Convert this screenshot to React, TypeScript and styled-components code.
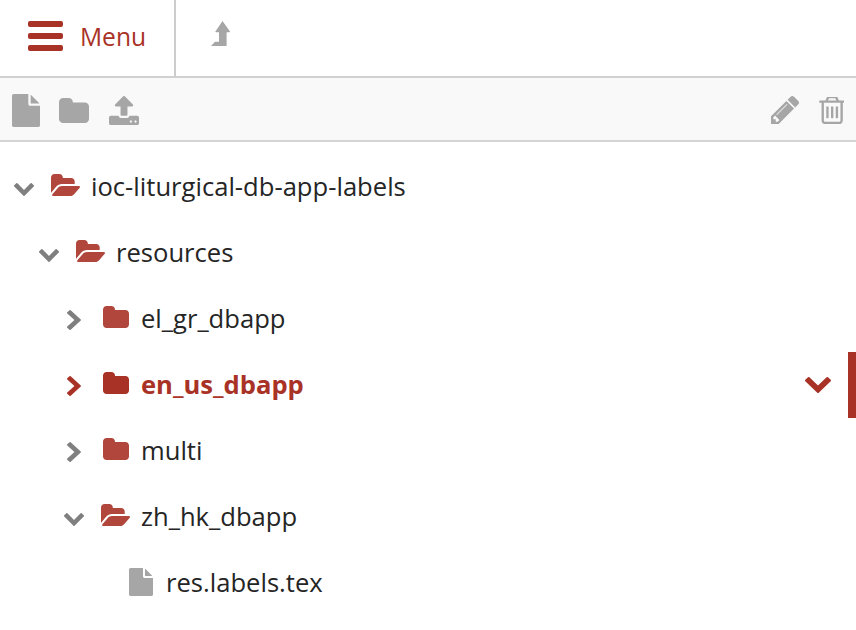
import React from "react";
import styled, { createGlobalStyle } from "styled-components";

const RED = "#a93226";
const GREY = "#a6a6a6";

const GlobalStyle = createGlobalStyle`
  html, body {
    margin: 0;
    padding: 0;
    background: #fff;
    font-family: "Open Sans", "Liberation Sans", sans-serif;
    overflow: hidden;
  }
`;

const PATHS = {
  file: "M1024 512v-472q22 14 36 28l408 408q14 14 28 36h-472zm-128 32q0 40 28 68t68 28h544v1056q0 40-28 68t-68 28h-1344q-40 0-68-28t-28-68v-1600q0-40 28-68t68-28h800v544z",
  folder: "M1728 608v704q0 92-66 158t-158 66h-1216q-92 0-158-66t-66-158v-960q0-92 66-158t158-66h320q92 0 158 66t66 158v32h672q92 0 158 66t66 158z",
  folderOpen: "M1879 952q0 31-31 66l-336 396q-43 51-120.5 86.5t-143.5 35.5h-1088q-34 0-60.5-13t-26.5-43q0-31 31-66l336-396q43-51 120.5-86.5t143.5-35.5h1088q34 0 60.5 13t26.5 43zm-343-344v160h-832q-94 0-197 47.5t-164 119.5l-337 396-5 6q0-4-.5-12.5t-.5-12.5v-960q0-92 66-158t158-66h320q92 0 158 66t66 158v32h544q92 0 158 66t66 158z",
  upload: "M1344 1472q0-26-19-45t-45-19-45 19-19 45 19 45 45 19 45-19 19-45zm256 0q0-26-19-45t-45-19-45 19-19 45 19 45 45 19 45-19 19-45zm128-224v320q0 40-28 68t-68 28h-1472q-40 0-68-28t-28-68v-320q0-40 28-68t68-28h427q21 56 70.5 92t110.5 36h256q61 0 110.5-36t70.5-92h427q40 0 68 28t28 68zm-325-648q-17 40-59 40h-256v448q0 26-19 45t-45 19h-256q-26 0-45-19t-19-45v-448h-256q-42 0-59-40-17-39 14-69l448-448q18-19 45-19t45 19l448 448q31 30 14 69z",
  pencil: "M491 1536l91-91-235-235-91 91v107h128v128h107zm523-928q0-22-22-22-10 0-17 7l-542 542q-7 7-7 17 0 22 22 22 10 0 17-7l542-542q7-7 7-17zm-54-192l416 416-832 832h-416v-416zm683 96q0 53-37 90l-166 166-416-416 166-165q36-38 90-38 53 0 91 38l235 234q37 39 37 91z",
  trash: "M704 736v576q0 14-9 23t-23 9h-64q-14 0-23-9t-9-23v-576q0-14 9-23t23-9h64q14 0 23 9t9 23zm256 0v576q0 14-9 23t-23 9h-64q-14 0-23-9t-9-23v-576q0-14 9-23t23-9h64q14 0 23 9t9 23zm256 0v576q0 14-9 23t-23 9h-64q-14 0-23-9t-9-23v-576q0-14 9-23t23-9h64q14 0 23 9t9 23zm128 724v-948h-896v948q0 22 7 40.5t14.5 27 10.5 8.5h832q3 0 10.5-8.5t14.5-27 7-40.5zm-672-1076h448l-48-117q-7-9-17-11h-317q-10 2-17 11zm928 32v64q0 14-9 23t-23 9h-96v948q0 83-47 143.5t-113 60.5h-832q-66 0-113-58.5t-47-141.5v-952h-96q-14 0-23-9t-9-23v-64q0-14 9-23t23-9h309l70-167q15-37 54-63t79-26h320q40 0 79 26t54 63l70 167h309q14 0 23 9t9 23z",
  chevronDown: "M1683 808l-742 741q-19 19-45 19t-45-19l-742-741q-19-19-19-45.5t19-45.5l166-165q19-19 45-19t45 19l531 531 531-531q19-19 45-19t45 19l166 165q19 19 19 45.5t-19 45.5z",
  chevronRight: "M1363 877l-742 742q-19 19-45 19t-45-19l-166-166q-19-19-19-45t19-45l531-531-531-531q-19-19-19-45t19-45l166-166q19-19 45-19t45 19l742 742q19 19 19 45t-19 45z",
  levelUp: "M11.5 0 L19 10.4 Q19.4 11.2 18.4 11.2 L15.6 11.2 L15.6 25 L0 25 L4 20.8 L8 20.8 L8 11.2 L5 11.2 Q4 11.2 4.4 10.4 Z",
};

const BOXES: Record<keyof typeof PATHS, string> = {
  file: "0 0 1536 1792",
  folder: "64 128 1664 1408",
  folderOpen: "0 128 1879 1408",
  upload: "64 64 1664 1600",
  pencil: "128 149 1515 1515",
  trash: "128 192 1408 1472",
  chevronDown: "90 533 1612 1035",
  chevronRight: "346 26 1036 1612",
  levelUp: "0 0 20 25",
};

type IconName = keyof typeof PATHS;

const Svg = styled.svg<{ $w: number; $h: number; $color: string }>`
  display: block;
  flex: none;
  width: ${(p) => p.$w}px;
  height: ${(p) => p.$h}px;
  fill: ${(p) => p.$color};
`;

const Icon = ({ name, w, h, color }: { name: IconName; w: number; h: number; color: string }) => (
  <Svg viewBox={BOXES[name]} $w={w} $h={h} $color={color} preserveAspectRatio="none">
    <path d={PATHS[name]} />
  </Svg>
);

const Page = styled.div`
  width: 856px;
  height: 630px;
  display: flex;
  flex-direction: column;
  background: #fff;
`;

const TopBar = styled.header`
  display: flex;
  height: 76px;
  flex: none;
  border-bottom: 2px solid #d0d0d0;
`;

const MenuButton = styled.div`
  width: 146px;
  display: flex;
  align-items: center;
  padding-left: 28px;
  gap: 17px;
  border-right: 2px solid #cccccc;
  color: ${RED};
  font-size: 24.6px;
  font-weight: 500;
  line-height: 1;
`;

const Burger = styled.span`
  display: flex;
  flex-direction: column;
  gap: 6px;
  width: 35px;
  margin-top: -4px;
`;

const BurgerBar = styled.span`
  display: block;
  height: 6px;
  border-radius: 2px;
  background: ${RED};
`;

const MenuLabel = styled.span`
  margin-top: -1px;
`;

const UpCell = styled.div`
  padding: 21px 0 0 35px;
`;

const Toolbar = styled.div`
  display: flex;
  justify-content: space-between;
  align-items: center;
  height: 62px;
  flex: none;
  padding: 0 12px;
  background: #f9f9f9;
  border-bottom: 2px solid #d4d4d4;
`;

const ToolGroup = styled.div`
  display: flex;
  align-items: center;
  margin-top: 2px;
`;

const LeftTools = styled(ToolGroup)`
  gap: 19px;

  & > svg:last-child {
    margin-left: 1px;
  }
`;

const RightTools = styled(ToolGroup)`
  gap: 19px;
`;

const Tree = styled.ul`
  list-style: none;
  margin: 12px 0 0;
  padding: 0;
`;

const Row = styled.li<{ $depth: number; $selected?: boolean }>`
  position: relative;
  display: flex;
  align-items: center;
  height: 66px;
  padding-left: ${(p) => 12 + p.$depth * 25}px;
  color: ${(p) => (p.$selected ? RED : "#252525")};
  font-size: 25.6px;
  font-weight: ${(p) => (p.$selected ? 700 : 400)};
`;

const ChevronSlot = styled.span<{ $open: boolean }>`
  width: 24px;
  flex: none;
  display: flex;
  justify-content: center;
  margin-top: ${(p) => (p.$open ? 5 : 1)}px;
`;

const IconSlot = styled.span`
  width: 31px;
  margin-left: 14px;
  flex: none;
  display: flex;
  justify-content: center;
  margin-top: -4px;
`;

const FileSlot = styled(IconSlot)`
  margin-top: -2px;
  margin-left: 38px;
`;

const Label = styled.span`
  margin-left: 10px;
  margin-top: -1px;
  white-space: nowrap;
`;

const SelectedMark = styled.span`
  position: absolute;
  right: 0;
  top: 0;
  bottom: 0;
  width: 8px;
  background: ${RED};
`;

const RowCaret = styled.span`
  position: absolute;
  right: 25px;
  top: 25px;
  display: block;
`;

const FOLDER_RED = "#b1473c";

type Node = {
  name: string;
  depth: number;
  kind: "open" | "closed" | "file";
  selected?: boolean;
};

const nodes: Node[] = [
  { name: "ioc-liturgical-db-app-labels", depth: 0, kind: "open" },
  { name: "resources", depth: 1, kind: "open" },
  { name: "el_gr_dbapp", depth: 2, kind: "closed" },
  { name: "en_us_dbapp", depth: 2, kind: "closed", selected: true },
  { name: "multi", depth: 2, kind: "closed" },
  { name: "zh_hk_dbapp", depth: 2, kind: "open" },
  { name: "res.labels.tex", depth: 3, kind: "file" },
];

const TreeRow = ({ node }: { node: Node }) => {
  const folderColor = node.selected ? RED : FOLDER_RED;
  const chevronColor = node.selected ? RED : "#7f7f7f";

  if (node.kind === "file") {
    return (
      <Row $depth={node.depth}>
        <FileSlot>
          <Icon name="file" w={24} h={28} color={GREY} />
        </FileSlot>
        <Label>{node.name}</Label>
      </Row>
    );
  }

  return (
    <Row $depth={node.depth} $selected={node.selected}>
      <ChevronSlot $open={node.kind === "open"}>
        {node.kind === "open" ? (
          <Icon name="chevronDown" w={20} h={13} color={chevronColor} />
        ) : (
          <Icon name="chevronRight" w={14} h={20} color={chevronColor} />
        )}
      </ChevronSlot>
      <IconSlot>
        {node.kind === "open" ? (
          <Icon name="folderOpen" w={29} h={22} color={folderColor} />
        ) : (
          <Icon name="folder" w={26} h={22} color={folderColor} />
        )}
      </IconSlot>
      <Label>{node.name}</Label>
      {node.selected && (
        <>
          <RowCaret>
            <Icon name="chevronDown" w={26} h={16} color={RED} />
          </RowCaret>
          <SelectedMark />
        </>
      )}
    </Row>
  );
};

export default function App() {
  return (
    <Page>
      <GlobalStyle />
      <TopBar>
        <MenuButton>
          <Burger>
            <BurgerBar />
            <BurgerBar />
            <BurgerBar />
          </Burger>
          <MenuLabel>Menu</MenuLabel>
        </MenuButton>
        <UpCell>
          <Icon name="levelUp" w={20} h={25} color={GREY} />
        </UpCell>
      </TopBar>
      <Toolbar>
        <LeftTools>
          <Icon name="file" w={28} h={33} color={GREY} />
          <Icon name="folder" w={30} h={25} color={GREY} />
          <Icon name="upload" w={30} h={29} color={GREY} />
        </LeftTools>
        <RightTools>
          <Icon name="pencil" w={28} h={28} color={GREY} />
          <Icon name="trash" w={26} h={27} color={GREY} />
        </RightTools>
      </Toolbar>
      <Tree>
        {nodes.map((node) => (
          <TreeRow key={node.name} node={node} />
        ))}
      </Tree>
    </Page>
  );
}
